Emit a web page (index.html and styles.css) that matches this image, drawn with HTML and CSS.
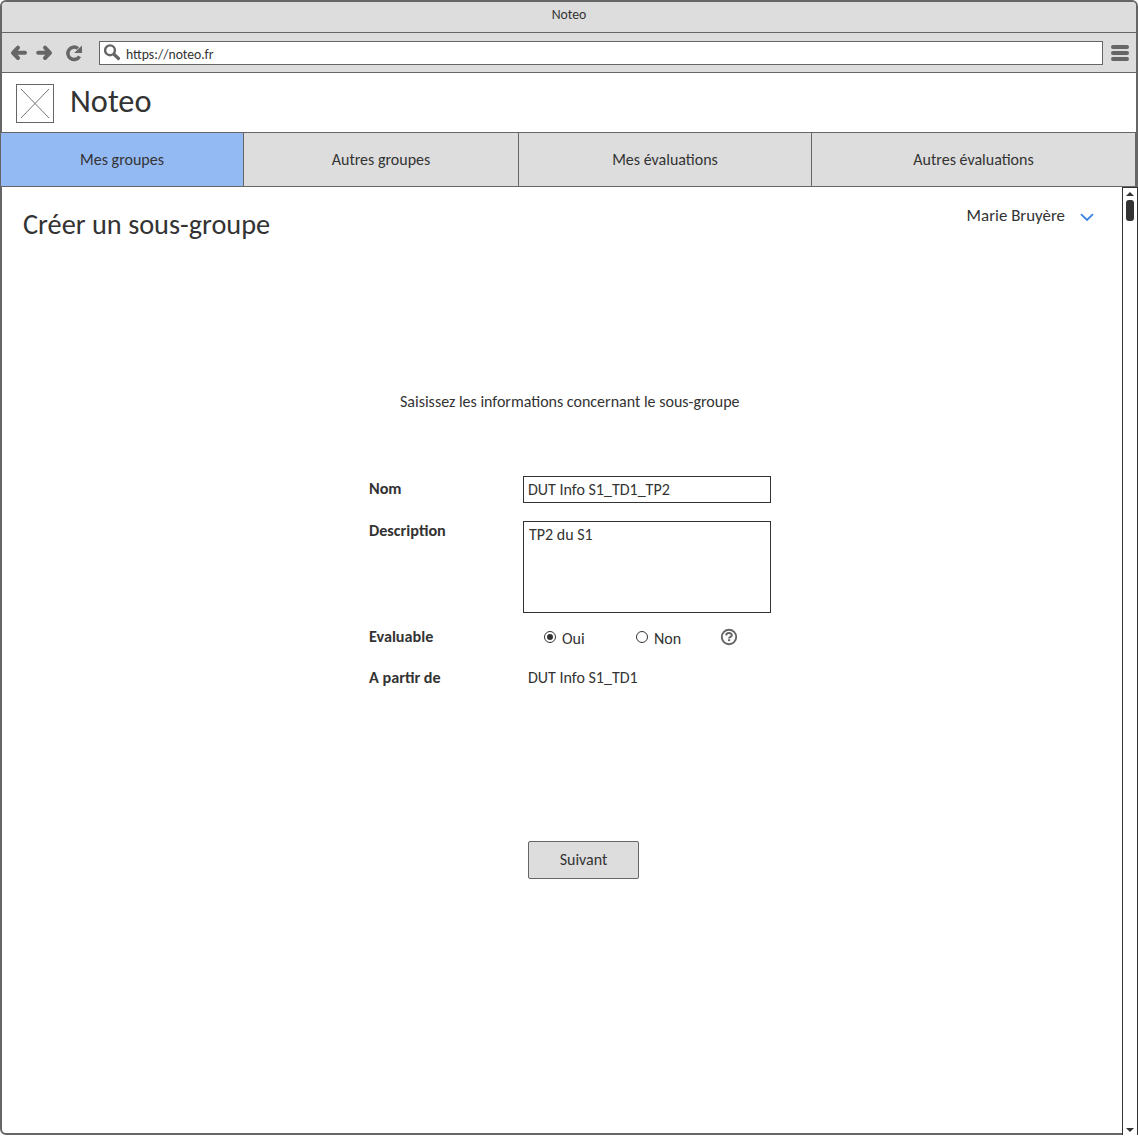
FILE: index.html
```html
<!DOCTYPE html>
<html lang="fr">
<head>
<meta charset="utf-8">
<title>Noteo</title>
<link rel="stylesheet" href="styles.css">
</head>
<body>
<div class="window">
  <div class="titlebar"><span>Noteo</span></div>
  <div class="toolbar">
    <svg class="nav-icons" width="80" height="24" viewBox="0 0 80 24">
      <g fill="none" stroke="#666" stroke-width="4" stroke-linecap="round" stroke-linejoin="round">
        <path d="M9 6.600L4 11.800l5 5.200M5 11.800h11" />
        <path d="M36 6.600l5 5.200-5 5.200M40.500 11.800H29.200" />
      </g>
      <path d="M70.500 15.300A6.200 6.200 0 1 1 69 7.500" fill="none" stroke="#666" stroke-width="3.500" />
      <path d="M73 4.500v7.500h-7.800z" fill="#666" />
    </svg>
    <div class="address">
      <svg width="18" height="18" viewBox="0 0 18 18" fill="none" stroke="#666">
        <circle cx="6" cy="6.300" r="4.900" stroke-width="2.400" />
        <path d="M10.200 10.500l4.300 4" stroke-width="3.200" stroke-linecap="round" />
      </svg>
      <span>https://noteo.fr</span>
    </div>
    <div class="burger"><i></i><i></i><i></i></div>
  </div>
  <header class="brand">
    <svg width="38" height="39" viewBox="0 0 38 39">
      <rect x=".5" y=".5" width="37" height="38" fill="#fff" stroke="#666" />
      <path d="M5 5l28 29M33 5L5 34" stroke="#666" stroke-width=".9" />
    </svg>
    <span class="brand-name">Noteo</span>
  </header>
  <nav class="tabs">
    <a class="tab active"><span>Mes groupes</span></a>
    <a class="tab"><span>Autres groupes</span></a>
    <a class="tab"><span>Mes évaluations</span></a>
    <a class="tab"><span>Autres évaluations</span></a>
  </nav>
  <main class="body">
    <section class="page">
      <div class="page-head">
        <h1 class="title">Créer un sous-groupe</h1>
        <div class="user">
          <span>Marie Bruyère</span>
          <svg width="14" height="9" viewBox="0 0 14 9"><path d="M1 1.200l6 5.800 6-5.800" fill="none" stroke="#3b82e6" stroke-width="1.800" /></svg>
        </div>
      </div>
      <p class="intro"><span>Saisissez les informations concernant le sous-groupe</span></p>
      <form class="form">
        <label class="label"><span>Nom</span></label>
        <div class="field"><span>DUT Info S1_TD1_TP2</span></div>
        <label class="label desc"><span>Description</span></label>
        <div class="field area"><span>TP2 du S1</span></div>
        <label class="label low"><span>Evaluable</span></label>
        <div class="choices">
          <span class="choice"><i class="radio on"></i><span>Oui</span></span>
          <span class="choice"><i class="radio"></i><span>Non</span></span>
          <svg width="18" height="18" viewBox="0 0 18 18" fill="none" stroke="#666">
            <circle cx="9" cy="9" r="7.200" stroke-width="1.900" />
            <path d="M6.100 7.300C6.400 4.300 11.800 4.300 11.800 7.200c0 1.900-2.600 1.600-2.700 3.300" stroke-width="2" />
            <path d="M8 12.200h2.200" stroke-width="1.900" />
          </svg>
        </div>
        <label class="label from"><span>A partir de</span></label>
        <div class="value"><span>DUT Info S1_TD1</span></div>
      </form>
      <button class="next" type="button"><span>Suivant</span></button>
    </section>
    <div class="scroll">
      <svg width="8" height="4" viewBox="0 0 8 4"><path d="M0 4L4 0l4 4z" fill="#333" /></svg>
      <i class="thumb"></i>
      <svg class="down" width="8" height="4" viewBox="0 0 8 4"><path d="M0 0h8L4 4z" fill="#333" /></svg>
    </div>
  </main>
</div>
</body>
</html>
```
FILE: styles.css
```css
* { box-sizing: border-box; }
body {
  margin: 0;
  background: #fff;
  color: #333;
  font: 16px/22px Calibri, Carlito, Lato, sans-serif;
}
span { white-space: nowrap; }
svg { display: block; flex: none; }
.window {
  display: flex;
  flex-direction: column;
  width: 1138px;
  height: 1135px;
  border: 2px solid #666;
  border-radius: 6px;
}
.titlebar {
  height: 31px;
  padding-top: 2px;
  background: #ddd;
  border-bottom: 1px solid #666;
  border-radius: 4px 4px 0 0;
  text-align: center;
  font-size: 13.7px;
}
.toolbar {
  display: flex;
  align-items: center;
  height: 40px;
  padding: 0 7px;
  background: #ddd;
  border-bottom: 1px solid #666;
}
.nav-icons { margin-right: 10px; }
.address {
  display: flex;
  align-items: center;
  flex: 1;
  height: 24px;
  padding-left: 4px;
  background: #fff;
  border: 1px solid #666;
  font-size: 13.7px;
}
.address span { margin: 4px 0 0 4px; }
.burger {
  display: grid;
  gap: 2px;
  width: 18px;
  margin-left: 8px;
}
.burger i { height: 4px; border-radius: 2px; background: #666; }
.brand {
  display: flex;
  gap: 16px;
  height: 59px;
  padding: 11px 14px 0;
}
.brand-name { font-size: 32.3px; line-height: 34px; }
.tabs {
  display: grid;
  grid-template-columns: 243px 275px 293px 325px;
  height: 55px;
  margin-left: -2px;
  border-bottom: 1px solid #666;
  border-top: 1px solid #666;
}
.tab {
  display: flex;
  align-items: center;
  justify-content: center;
  padding-top: 1px;
  background: #ddd;
  border-left: 1px solid #666;
}
.tab:last-child { border-right: 1px solid #666; }
.tab.active { background: #94baf3; }
.body { display: flex; flex: 1; min-height: 0; }
.page {
  display: flex;
  flex: none;
  flex-direction: column;
  width: 1120px;
}
.page-head {
  display: flex;
  justify-content: space-between;
  height: 204px;
  padding: 18px 28px 0 21px;
}
.title { margin: 0; font-size: 28.3px; font-weight: 400; line-height: 40px; white-space: nowrap; }
.user { display: flex; gap: 15px; height: 22px; align-items: center; font-size: 16.9px; }
.user svg { margin-top: 2px; }
.intro { margin: 0 0 63px 398px; }
.form {
  display: grid;
  grid-template-columns: 154px 248px;
  grid-template-rows: 45px 92px 48px 32px;
  margin-left: 367px;
}
.label { padding-top: 2px; font-size: 16.200px; font-weight: 700; }
.label.desc { padding-top: 0; margin-top: -1px; }
.label.low { padding-top: 13px; }
.label.from { padding-top: 6px; }
.field {
  height: 27px;
  padding: 2px 4px;
  border: 1px solid #333;
}
.field.area { height: 92px; padding-left: 5px; }
.choices { display: flex; align-items: center; padding-left: 21px; }
.choice { display: flex; align-items: center; gap: 6px; width: 92px; }
.choice span { padding-top: 3px; }
.choices svg { margin-left: -8px; }
.radio {
  display: flex;
  width: 12px;
  height: 12px;
  border: 1.500px solid #333;
  border-radius: 50%;
}
.radio.on::before {
  content: "";
  width: 6px;
  height: 6px;
  margin: auto;
  border-radius: 50%;
  background: #333;
}
.value { padding: 6px 5px; }
.next {
  width: 111px;
  height: 38px;
  margin: 148px 0 0 526px;
  padding: 0;
  background: #ddd;
  border: 1px solid #666;
  border-radius: 2px;
  color: inherit;
  font: inherit;
}
.scroll {
  display: flex;
  flex: none;
  flex-direction: column;
  align-items: center;
  width: 16px;
  height: 949px;
  padding: 4px 0 3px;
  background: #fff;
  border: 1px solid #333;
}
.thumb { width: 8px; height: 21px; margin-top: 4px; border-radius: 3px; background: #333; }
.down { margin-top: auto; }
```
